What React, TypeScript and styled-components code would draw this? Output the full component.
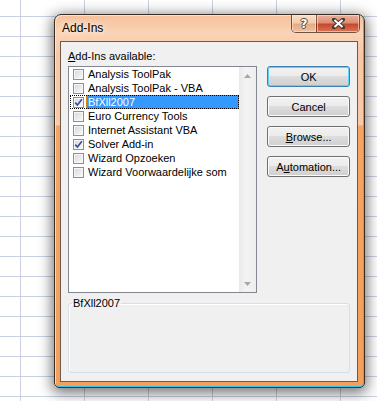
import React from 'react'
import styled, { createGlobalStyle } from 'styled-components'

const GlobalStyle = createGlobalStyle`
  html, body {
    margin: 0;
    height: 100%;
  }
  body {
    overflow: hidden;
    background-color: #fff;
    background-image:
      linear-gradient(to right, #c9d1e3 1px, transparent 1px),
      linear-gradient(to bottom, #c9d1e3 1px, transparent 1px);
    background-size: 64px 20px;
    background-position: 20px 16px;
    font-family: "Liberation Sans", Arial, sans-serif;
    font-size: 11px;
    color: #000;
  }
  #root {
    padding: 14px 0 0 54px;
  }
`

const Window = styled.div`
  box-sizing: border-box;
  width: 311px;
  height: 374px;
  display: flex;
  flex-direction: column;
  padding: 0 6px 5px 5px;
  border: 1px solid #3b2c22;
  border-radius: 7px 7px 5px 5px;
  background: linear-gradient(
    to bottom,
    #f6c19b 0px,
    #f9d3b6 18px,
    #f8c8a4 40px,
    #f8caa8 110px,
    #f4a564 111px,
    #f2a05b 100%
  );
  box-shadow: inset -1px -1px 0 #35c4ee, inset 1px 1px 0 rgba(255, 240, 225, 0.7),
    0 3px 14px 2px rgba(0, 0, 0, 0.55);
`

const TitleBar = styled.div`
  height: 26px;
  display: flex;
  align-items: flex-start;
  justify-content: space-between;
`

const Title = styled.div`
  margin: 6px 0 0 2px;
  font-size: 12px;
  line-height: 14px;
  text-shadow: 0 0 6px #fff, 0 0 10px rgba(255, 255, 255, 0.8);
`

const CaptionButtons = styled.div`
  display: flex;
  margin: 0 -2px 0 0;
  height: 17px;
  border: 1px solid rgba(70, 40, 25, 0.75);
  border-top: none;
  border-radius: 0 0 5px 5px;
  overflow: hidden;
`

const CaptionButton = styled.div<{ $close?: boolean }>`
  width: ${({ $close }) => ($close ? '42px' : '24px')};
  display: flex;
  align-items: center;
  justify-content: center;
  box-shadow: inset 0 0 0 1px rgba(255, 235, 220, 0.55);
  border-left: ${({ $close }) => ($close ? '1px solid rgba(70, 40, 25, 0.6)' : 'none')};
  background: ${({ $close }) =>
    $close
      ? 'linear-gradient(to bottom, #eab19c 0%, #df8d74 45%, #c5492c 55%, #d97658 100%)'
      : 'linear-gradient(to bottom, #f9dfcb 0%, #f3cbad 45%, #e5ab84 55%, #eec3a2 100%)'};
`

const HelpGlyph = styled.span`
  font-family: "DejaVu Sans", sans-serif;
  font-weight: bold;
  font-size: 12px;
  line-height: 12px;
  color: #fff;
  text-shadow: 1px 0 0 #4a4a4a, -1px 0 0 #4a4a4a, 0 1px 0 #4a4a4a, 0 -1px 0 #4a4a4a;
`

const Client = styled.div`
  flex: 1;
  display: flex;
  flex-direction: column;
  padding: 8px 7px 8px 7px;
  border: 1px solid #6d584a;
  background: #f0f0f0;
`

const Caption = styled.div`
  line-height: 13px;
  margin-bottom: 3px;
`

const Key = styled.span`
  text-decoration: underline;
`

const MainRow = styled.div`
  display: flex;
  gap: 10px;
`

const ListBox = styled.div`
  box-sizing: border-box;
  width: 190px;
  height: 227px;
  display: flex;
  border: 1px solid #828790;
  background: #fff;
`

const Items = styled.div`
  flex: 1;
  display: flex;
  flex-direction: column;
`

const Row = styled.div<{ $focused?: boolean }>`
  height: 14px;
  display: flex;
  align-items: center;
  padding-left: 3px;
  outline: ${({ $focused }) => ($focused ? '1px dotted #000' : 'none')};
  outline-offset: -1px;
  margin-left: 1px;
`

const Box = styled.span`
  box-sizing: border-box;
  width: 11px;
  height: 11px;
  flex: none;
  display: flex;
  align-items: center;
  justify-content: center;
  border: 1px solid #8e8f8f;
  background: linear-gradient(135deg, #d6d6d6 0%, #f4f4f4 80%, #fff 100%);
  box-shadow: inset 0 0 0 1px #f7f7f7;
`

const ItemText = styled.span<{ $selected?: boolean }>`
  flex: 1;
  height: 14px;
  line-height: 14px;
  margin-left: 2px;
  padding-left: 2px;
  white-space: nowrap;
  color: ${({ $selected }) => ($selected ? '#fff' : '#000')};
  background: ${({ $selected }) => ($selected ? '#3399ff' : 'transparent')};
  outline: ${({ $selected }) => ($selected ? '1px dotted #e8901c' : 'none')};
  outline-offset: -1px;
`

const ScrollBar = styled.div`
  width: 17px;
  display: flex;
  flex-direction: column;
  justify-content: space-between;
  background: linear-gradient(to right, #e9e9e9, #f3f3f3 40%, #eeeeee);
`

const ScrollArrow = styled.div`
  height: 17px;
  display: flex;
  align-items: center;
  justify-content: center;
`

const Buttons = styled.div`
  width: 83px;
  display: flex;
  flex-direction: column;
  gap: 9px;
`

const Button = styled.div<{ $default?: boolean }>`
  box-sizing: border-box;
  height: 21px;
  display: flex;
  align-items: center;
  justify-content: center;
  border: 1px solid ${({ $default }) => ($default ? '#3c7fb1' : '#707070')};
  border-radius: 3px;
  background: linear-gradient(to bottom, #f2f2f2 0%, #ebebeb 49%, #dddddd 50%, #cfcfcf 100%);
  box-shadow: inset 0 0 0 1px ${({ $default }) => ($default ? '#5fd2fb' : '#fbfbfb')};
`

const GroupBox = styled.fieldset`
  flex: 1;
  margin: 4px 0 0;
  padding: 0 3px;
  min-width: 0;
  border: 1px solid #d5dfe5;
  border-radius: 3px;
  box-shadow: inset 1px 1px 0 #fff;
`

const Legend = styled.legend`
  padding: 0 1px;
  line-height: 12px;
`

function CheckBox({ checked }: { checked?: boolean }) {
  return (
    <Box>
      {checked && (
        <svg width="9" height="9" viewBox="0 0 9 9">
          <path d="M1.2 4.6 L3.4 7 L7.9 1.2" fill="none" stroke="#3a4b9a" strokeWidth="1.6" />
        </svg>
      )}
    </Box>
  )
}

const addIns = [
  { name: 'Analysis ToolPak', checked: false },
  { name: 'Analysis ToolPak - VBA', checked: false },
  { name: 'BfXll2007', checked: true, selected: true },
  { name: 'Euro Currency Tools', checked: false },
  { name: 'Internet Assistant VBA', checked: false },
  { name: 'Solver Add-in', checked: true },
  { name: 'Wizard Opzoeken', checked: false },
  { name: 'Wizard Voorwaardelijke som', checked: false }
]

export default function App() {
  return (
    <>
      <GlobalStyle />
      <Window>
        <TitleBar>
          <Title>Add-Ins</Title>
          <CaptionButtons>
            <CaptionButton>
              <HelpGlyph>?</HelpGlyph>
            </CaptionButton>
            <CaptionButton $close>
              <svg width="13" height="11" viewBox="0 0 13 11">
                <path d="M2 1.5 L11 9.5 M11 1.5 L2 9.5" stroke="#4a3a35" strokeWidth="4" strokeLinecap="square" />
                <path d="M2.5 2 L10.5 9 M10.5 2 L2.5 9" stroke="#fff" strokeWidth="2" />
              </svg>
            </CaptionButton>
          </CaptionButtons>
        </TitleBar>
        <Client>
          <Caption>
            <Key>A</Key>dd-Ins available:
          </Caption>
          <MainRow>
            <ListBox>
              <Items>
                {addIns.map((item) => (
                  <Row key={item.name} $focused={item.selected}>
                    <CheckBox checked={item.checked} />
                    <ItemText $selected={item.selected}>{item.name}</ItemText>
                  </Row>
                ))}
              </Items>
              <ScrollBar>
                <ScrollArrow>
                  <svg width="7" height="4" viewBox="0 0 7 4">
                    <path d="M0 4 L3.5 0 L7 4 Z" fill="#a7a7a7" />
                  </svg>
                </ScrollArrow>
                <ScrollArrow>
                  <svg width="7" height="4" viewBox="0 0 7 4">
                    <path d="M0 0 L3.5 4 L7 0 Z" fill="#a7a7a7" />
                  </svg>
                </ScrollArrow>
              </ScrollBar>
            </ListBox>
            <Buttons>
              <Button $default>OK</Button>
              <Button>Cancel</Button>
              <Button>
                <span>
                  <Key>B</Key>rowse...
                </span>
              </Button>
              <Button>
                <span>
                  A<Key>u</Key>tomation...
                </span>
              </Button>
            </Buttons>
          </MainRow>
          <GroupBox>
            <Legend>BfXll2007</Legend>
          </GroupBox>
        </Client>
      </Window>
    </>
  )
}
